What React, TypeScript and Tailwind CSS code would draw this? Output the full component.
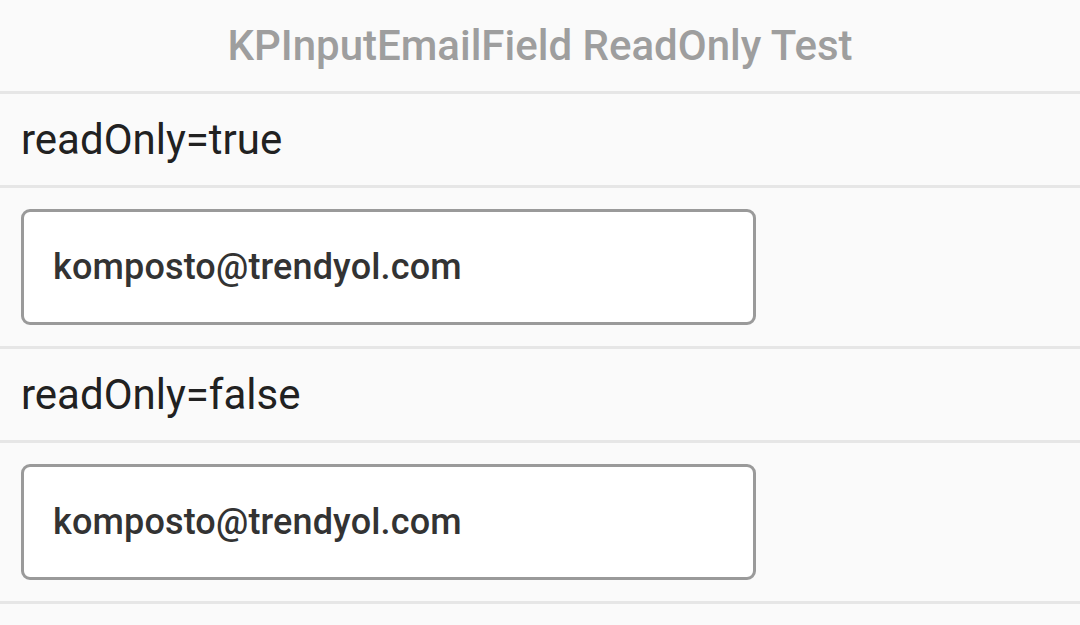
import React from "react";

function Label({ text }: { text: string }) {
  return (
    <div className="box-content h-[91px] flex items-center pl-[21px] border-b-[3px] border-[#e6e6e6]">
      <span className="text-[42px] text-[#212121] leading-none">{text}</span>
    </div>
  );
}

function InputRow({ value, readOnly }: { value: string; readOnly: boolean }) {
  return (
    <div className="box-content h-[116px] px-[21px] py-[21px] border-b-[3px] border-[#e6e6e6]">
      <div className="w-[735px] h-[116px] bg-white border-[3px] border-[#9a9a9a] rounded-[9px] flex items-center px-[29px]">
        <input
          readOnly={readOnly}
          defaultValue={value}
          className="w-full bg-transparent outline-none text-[36px] tracking-[0.15px] font-medium text-[#333333]"
          style={{ fontFamily: "Roboto, sans-serif" }}
        />
      </div>
    </div>
  );
}

export default function App() {
  return (
    <div
      className="w-[1080px] h-[625px] bg-[#fafafa] overflow-hidden"
      style={{ fontFamily: "Roboto, 'Noto Sans', sans-serif" }}
    >
      <div className="box-content h-[91px] flex items-center justify-center border-b-[3px] border-[#e6e6e6]">
        <span className="text-[42px] font-medium text-[#9e9e9e] leading-none">
          KPInputEmailField ReadOnly Test
        </span>
      </div>
      <Label text="readOnly=true" />
      <InputRow value="komposto@trendyol.com" readOnly={true} />
      <Label text="readOnly=false" />
      <InputRow value="komposto@trendyol.com" readOnly={false} />
    </div>
  );
}
